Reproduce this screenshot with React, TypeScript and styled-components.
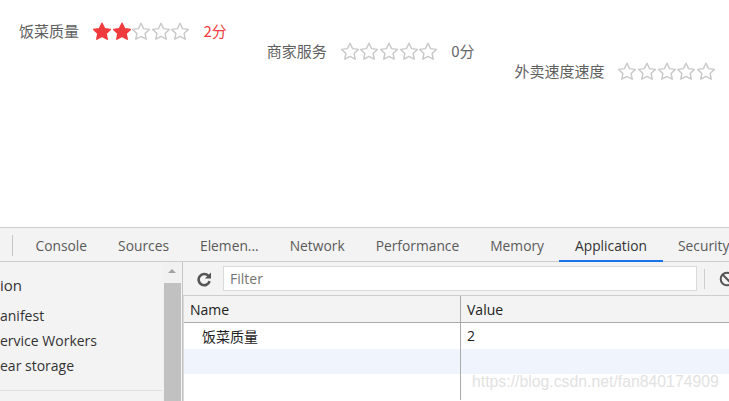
import styled, { createGlobalStyle } from 'styled-components'

const GlobalStyle = createGlobalStyle`
    html, body {
        margin: 0;
        padding: 0;
        background: #fff;
    }
    body {
        font-family: "Open Sans", "Noto Sans CJK SC", sans-serif;
    }
`

const Page = styled.div`
    width: 729px;
    height: 401px;
    display: flex;
    flex-direction: column;
    overflow: hidden;
    position: relative;
`

const RatingArea = styled.div`
    height: 227px;
    display: flex;
    align-items: flex-start;
    gap: 40px;
    padding: 21px 0 0 19px;
    box-sizing: border-box;
`

const RateItem = styled.div<{ $offset: number }>`
    display: flex;
    align-items: center;
    gap: 14px;
    margin-top: ${p => p.$offset}px;
    font-family: "Noto Sans CJK SC", sans-serif;
    font-size: 15px;
    line-height: 20px;
    white-space: nowrap;
`

const RateLabel = styled.span`
    color: #5f5f5f;
`

const Stars = styled.div`
    display: flex;
    gap: 1.6px;
`

const Score = styled.span<{ $active: boolean }>`
    color: ${p => (p.$active ? '#ef3b3d' : '#666')};
`

const DevTools = styled.div`
    flex: 1;
    display: flex;
    flex-direction: column;
    border-top: 1px solid #cdcdcd;
    background: #f3f3f3;
    min-height: 0;
    font-family: "Open Sans", "Noto Sans CJK SC", sans-serif;
`

const TabBar = styled.div`
    height: 33px;
    display: flex;
    align-items: stretch;
    border-bottom: 1px solid #cdcdcd;
    white-space: nowrap;
`

const TabDivider = styled.div`
    width: 1px;
    flex-shrink: 0;
    background: #c6c6c6;
    margin: 7px 7px 5px 12px;
`

const Tab = styled.div<{ $active?: boolean }>`
    padding: 3px 15.5px 0;
    display: flex;
    align-items: center;
    font-size: 13.8px;
    color: ${p => (p.$active ? '#333' : '#5a5a5a')};
    border-bottom: 2px solid ${p => (p.$active ? '#1a73e8' : 'transparent')};
    margin-bottom: -1px;
`

const Body = styled.div`
    flex: 1;
    display: flex;
    min-height: 0;
`

const Sidebar = styled.div`
    width: 182px;
    display: flex;
    border-right: 1px solid #c4c4c4;
    flex-shrink: 0;
`

const SideList = styled.div`
    flex: 1;
    padding-top: 12px;
    display: flex;
    flex-direction: column;
`

const SideHeading = styled.div`
    font-size: 15px;
    line-height: 22px;
    color: #333;
    margin-bottom: 7px;
`

const SideItem = styled.div`
    font-size: 14px;
    line-height: 25px;
    color: #333;
    white-space: nowrap;
`

const SideRule = styled.div`
    height: 1px;
    background: #dedede;
    margin: 12px 1px 0 0;
`

const ScrollTrack = styled.div`
    width: 18px;
    margin-right: 1px;
    display: flex;
    flex-direction: column;
    align-items: center;
    background: #f1f1f1;
`

const ScrollArrow = styled.div`
    width: 0;
    height: 0;
    border-left: 4px solid transparent;
    border-right: 4px solid transparent;
    border-bottom: 4px solid #a3a3a3;
    margin: 7px 0 10px;
`

const ScrollThumb = styled.div`
    width: 17px;
    flex: 1;
    background: #c1c1c1;
`

const Main = styled.div`
    flex: 1;
    display: flex;
    flex-direction: column;
    overflow: hidden;
    min-width: 0;
`

const Toolbar = styled.div`
    height: 33px;
    display: flex;
    align-items: center;
    padding-left: 13px;
    gap: 11px;
    border-bottom: 1px solid #cdcdcd;
    flex-shrink: 0;

    & > svg {
        flex-shrink: 0;
    }
`

const FilterInput = styled.div`
    width: 466px;
    height: 23px;
    flex-shrink: 0;
    background: #fff;
    border: 1px solid #dadada;
    display: flex;
    align-items: center;
    padding-left: 6px;
    box-sizing: content-box;
    font-size: 14px;
    color: #757575;
`

const ToolDivider = styled.div`
    width: 1px;
    height: 20px;
    background: #cfcfcf;
    flex-shrink: 0;
    margin-left: -4px;
    margin-right: 3px;
`

const Table = styled.div`
    flex: 1;
    display: grid;
    grid-template-columns: 276px 1fr;
    grid-template-rows: 27px;
    grid-auto-rows: 25.5px;
    background: #fff;
    border-left: 1px solid #d8d8d8;
    font-size: 14px;
    color: #222;
`

const HeadCell = styled.div<{ $first?: boolean }>`
    background: #f3f3f3;
    border-bottom: 1px solid #aaa;
    border-left: ${p => (p.$first ? 'none' : '1px solid #aaa')};
    padding-left: 6px;
    display: flex;
    align-items: center;
    box-sizing: border-box;
`

const Cell = styled.div<{ $first?: boolean; $stripe?: boolean; $indent?: boolean }>`
    background: ${p => (p.$stripe ? '#eff4fd' : '#fff')};
    border-left: ${p => (p.$first ? 'none' : '1px solid #aaa')};
    padding-left: ${p => (p.$indent ? '18px' : '6px')};
    display: flex;
    align-items: center;
`

const Watermark = styled.div`
    position: absolute;
    left: 472px;
    top: 373px;
    font-family: "Liberation Sans", Arial, sans-serif;
    font-size: 15.8px;
    color: #e2e2e2;
    white-space: nowrap;
`

function Star({ filled }: { filled: boolean }) {
    return (
        <svg width="18" height="19" viewBox="2 2 20 20">
            <path
                d="M12 2.8l2.85 6 6.45.85-4.75 4.5 1.25 6.45L12 17.4l-5.8 3.2 1.25-6.45L2.7 9.65l6.45-.85z"
                fill={filled ? '#ef3b3d' : 'none'}
                stroke={filled ? '#ef3b3d' : '#c9c9c9'}
                strokeWidth={1.6}
                strokeLinejoin="round"
            />
        </svg>
    )
}

function RefreshIcon() {
    return (
        <svg width="16" height="16" viewBox="0 0 16 16">
            <path d="M12.4 4.9A5.6 5.6 0 1 0 13.6 10.2" fill="none" stroke="#555" strokeWidth="2.6" />
            <path d="M15 1.4v6.2H8.8z" fill="#555" />
        </svg>
    )
}

function BlockIcon() {
    return (
        <svg width="16" height="16" viewBox="0 0 16 16">
            <circle cx="8" cy="8" r="6.3" fill="none" stroke="#555" strokeWidth="2" />
            <path d="M3.6 3.6l8.8 8.8" stroke="#555" strokeWidth="2" />
        </svg>
    )
}

interface Rating {
    label: string
    value: number
    score?: boolean
}

const ratings: Rating[] = [
    { label: '饭菜质量', value: 2, score: true },
    { label: '商家服务', value: 0, score: true },
    { label: '外卖速度速度', value: 0 },
]

const tabs = ['Console', 'Sources', 'Elemen...', 'Network', 'Performance', 'Memory', 'Application', 'Security']

export default function App() {
    return (
        <Page>
            <GlobalStyle />
            <RatingArea>
                {ratings.map((r, i) => (
                    <RateItem key={r.label} $offset={i * 20}>
                        <RateLabel>{r.label}</RateLabel>
                        <Stars>
                            {[0, 1, 2, 3, 4].map(n => (
                                <Star key={n} filled={n < r.value} />
                            ))}
                        </Stars>
                        {r.score && <Score $active={r.value > 0}>{r.value}分</Score>}
                    </RateItem>
                ))}
            </RatingArea>

            <DevTools>
                <TabBar>
                    <TabDivider />
                    {tabs.map(t => (
                        <Tab key={t} $active={t === 'Application'}>{t}</Tab>
                    ))}
                </TabBar>
                <Body>
                    <Sidebar>
                        <SideList>
                            <SideHeading>ion</SideHeading>
                            <SideItem>anifest</SideItem>
                            <SideItem>ervice Workers</SideItem>
                            <SideItem>ear storage</SideItem>
                            <SideRule />
                        </SideList>
                        <ScrollTrack>
                            <ScrollArrow />
                            <ScrollThumb />
                        </ScrollTrack>
                    </Sidebar>
                    <Main>
                        <Toolbar>
                            <RefreshIcon />
                            <FilterInput>Filter</FilterInput>
                            <ToolDivider />
                            <BlockIcon />
                        </Toolbar>
                        <Table>
                            <HeadCell $first>Name</HeadCell>
                            <HeadCell>Value</HeadCell>
                            <Cell $first $indent>饭菜质量</Cell>
                            <Cell>2</Cell>
                            <Cell $first $stripe />
                            <Cell $stripe />
                            <Cell $first />
                            <Cell />
                        </Table>
                    </Main>
                </Body>
            </DevTools>
            <Watermark>https://blog.csdn.net/fan840174909</Watermark>
        </Page>
    )
}
